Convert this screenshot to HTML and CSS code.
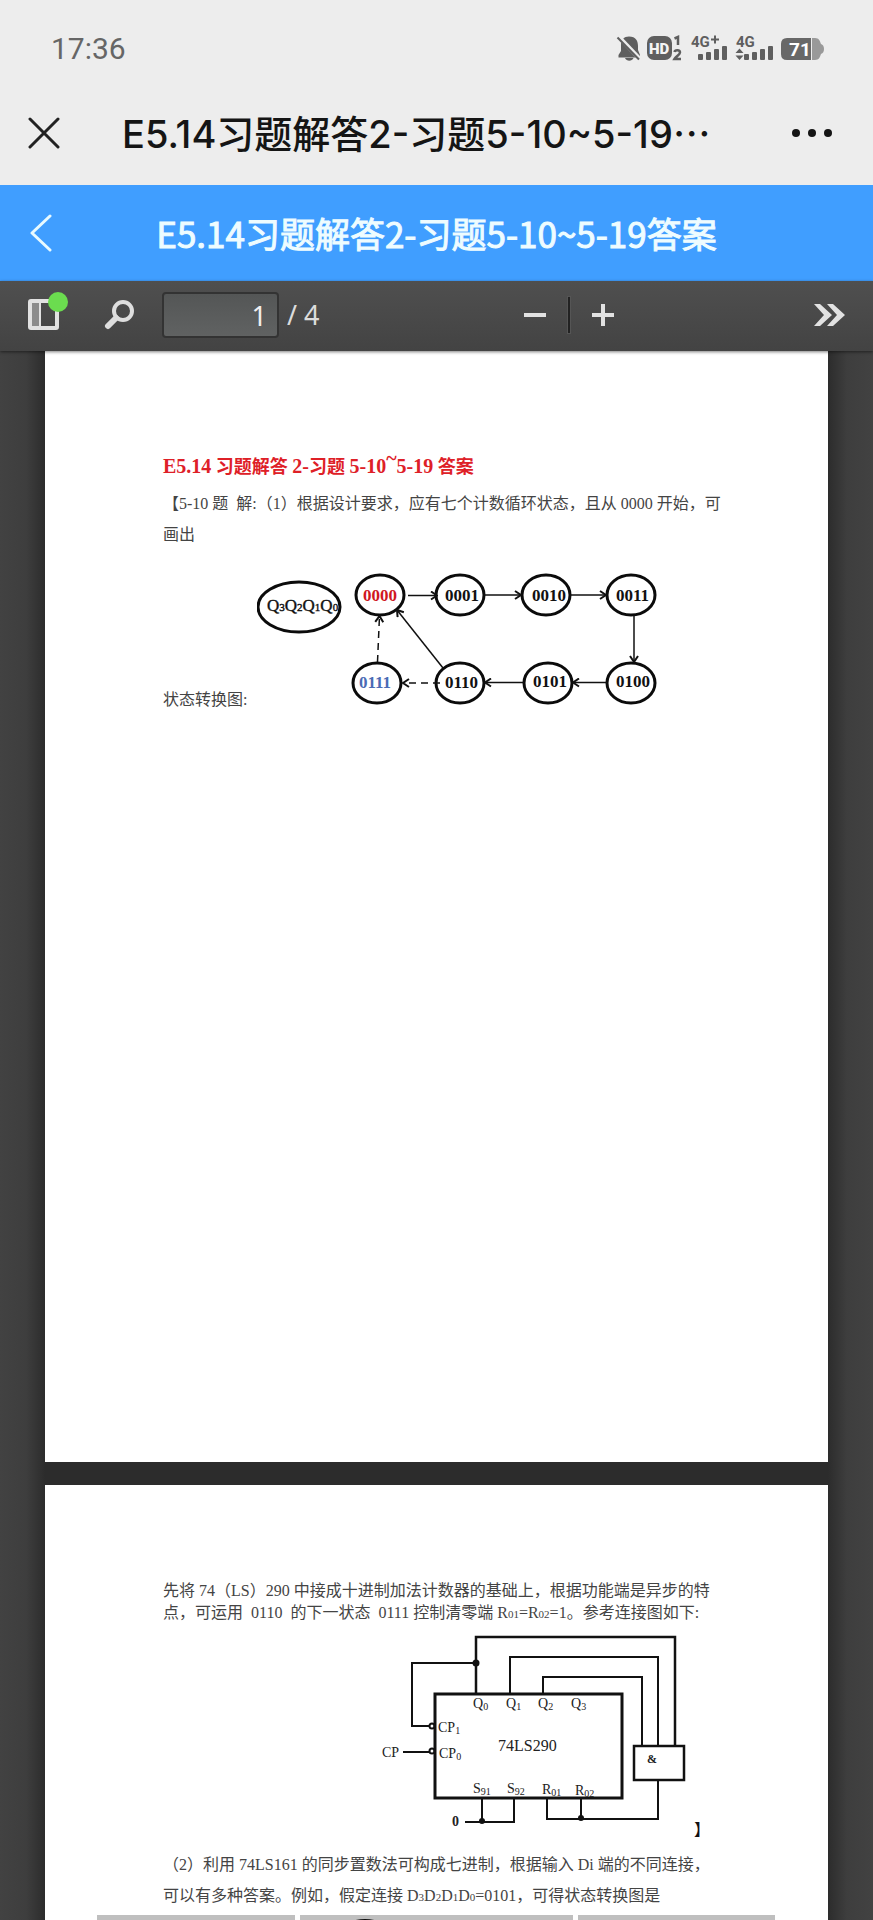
FILE: index.html
```html
<!DOCTYPE html>
<html lang="zh-CN">
<head>
<meta charset="utf-8">
<meta name="viewport" content="width=device-width, initial-scale=1">
<title>E5.14习题解答2-习题5-10~5-19答案</title>
<link rel="stylesheet" href="styles.css">
</head>
<body>
<div class="app">
  <div class="status">
    <span class="clock">17:36</span>
    <svg class="status-icons" width="208" height="28" viewBox="616 33 208 28" aria-hidden="true">
      <g fill="#5f5f5f">
        <path d="M629 35.500C636 35.500 638 40 638 45V49L640 54V56.500H618.500V54L621 50V44C621 38.500 624 35.500 629 35.500Z"/>
        <path d="M625 57H633.500C632 60.500 626.500 60.500 625 57Z"/>
        <path d="M618.500 35.500L639.500 57.500" stroke="#ededed" stroke-width="4"/>
        <path d="M617.500 36.500L639 58.500" stroke="#5f5f5f" stroke-width="2"/>
        <rect x="647" y="35" width="25" height="24" rx="7"/>
        <g stroke="#5f5f5f" stroke-width="2.500" fill="none">
          <path d="M674.500 37.500L678 36V44"/>
          <path d="M674.500 51C675 48.500 680 48.500 680 51.500C680 53.500 676 55.500 674.500 58H681"/>
        </g>
        <rect x="698" y="53" width="5" height="6" rx="1"/><rect x="706" y="51" width="5" height="8" rx="1"/><rect x="714" y="48" width="5" height="11" rx="1"/><rect x="722" y="45" width="5" height="14" rx="1"/>
        <rect x="744" y="53" width="5" height="6" rx="1"/><rect x="752" y="51" width="5" height="8" rx="1"/><rect x="760" y="48" width="5" height="11" rx="1"/><rect x="768" y="45" width="5" height="14" rx="1"/>
        <path d="M739.500 47.500L743.500 52H735.500ZM739.500 59L743.500 54.500H735.500Z"/>
        <path d="M711 38.500H719M715 34.500V42.500" stroke="#5f5f5f" stroke-width="2"/>
      </g>
      <path d="M812 37H815C819 37 820 40 821 43Q824 44 824 48Q824 52 821 53C820 56 819 59 815 59H812Z" fill="#999"/>
      <path d="M787 37H811V59H787Q781 59 781 53V43Q781 37 787 37Z" fill="#686868"/>
      <g font-family="Roboto, sans-serif" font-weight="900">
        <text x="649" y="53" font-size="15" fill="#f4f4f4">HD</text>
        <text x="691" y="46" font-size="15" font-weight="700" fill="#5f5f5f">4G</text>
        <text x="736" y="46" font-size="15" font-weight="700" fill="#5f5f5f">4G</text>
        <text x="789" y="55" font-size="19" font-weight="700" fill="#fff">71</text>
      </g>
    </svg>
  </div>

  <header class="titlebar">
    <button class="icon-btn" aria-label="关闭">
      <svg width="32" height="32" viewBox="0 0 32 32"><path d="M2 2L30 30M30 2L2 30" stroke="#222" stroke-width="3" stroke-linecap="round"/></svg>
    </button>
    <h1 class="webtitle">E5.14习题解答2-习题5-10~5-19<span class="dots">⋯</span></h1>
    <button class="icon-btn" aria-label="更多">
      <svg width="40" height="10" viewBox="0 0 40 10" fill="#151515"><circle cx="4" cy="5" r="4"/><circle cx="20" cy="5" r="4"/><circle cx="36" cy="5" r="4"/></svg>
    </button>
  </header>

  <header class="appbar">
    <button class="icon-btn" aria-label="返回">
      <svg width="22" height="38" viewBox="0 0 22 38"><path d="M20 2L2 19L20 36" fill="none" stroke="#e8faff" stroke-width="3" stroke-linecap="round" stroke-linejoin="round"/></svg>
    </button>
    <h2 class="apptitle">E5.14习题解答2-习题5-10~5-19答案</h2>
  </header>

  <div class="toolbar">
    <div class="tools">
      <button class="icon-btn" aria-label="切换侧栏">
        <svg class="spill" width="40" height="40" viewBox="0 0 40 40">
          <rect x="2" y="6" width="27" height="27" rx="1" fill="none" stroke="#e2e2e2" stroke-width="4"/>
          <rect x="4" y="8" width="7" height="23" fill="#8c8c8c"/>
          <path d="M12 7V32" stroke="#e2e2e2" stroke-width="2"/>
          <circle cx="30" cy="7" r="10" fill="#6bdc4f"/>
        </svg>
      </button>
      <button class="icon-btn find" aria-label="查找">
        <svg width="32" height="32" viewBox="0 0 32 32" fill="none" stroke="#dedede"><circle cx="19" cy="12" r="9" stroke-width="4"/><path d="M12 19L4 27" stroke-width="6" stroke-linecap="round"/></svg>
      </button>
      <input class="page-input" id="page" type="text" value="1" aria-label="页码">
      <label class="page-total" for="page">/ 4</label>
    </div>
    <div class="zoom">
      <button class="icon-btn" aria-label="缩小"><svg width="22" height="22" viewBox="0 0 22 22"><path d="M0 11H22" stroke="#e2e2e2" stroke-width="4"/></svg></button>
      <span class="divider"></span>
      <button class="icon-btn" aria-label="放大"><svg width="22" height="22" viewBox="0 0 22 22"><path d="M0 11H22M11 0V22" stroke="#e2e2e2" stroke-width="4"/></svg></button>
    </div>
    <button class="icon-btn" aria-label="工具">
      <svg width="31" height="22" viewBox="0 0 31 22" fill="#e2e2e2"><path d="M0 0H6L18 11L6 22H0L10 11Z"/><path d="M13 0H19L31 11L19 22H13L23 11Z"/></svg>
    </button>
  </div>

  <main class="viewer">
    <article class="page page-first">
      <h3 class="doc-title"><span class="latin">E5.14</span> 习题解答 <span class="latin">2-</span>习题 <span class="latin">5-10<sup>~</sup>5-19</span> 答案</h3>
      <p class="loose">【5-10 题&nbsp; 解:（1）根据设计要求，应有七个计数循环状态，且从 0000 开始，可</p>
      <p class="loose">画出</p>
      <div class="state-row">
        <span class="state-label">状态转换图:</span>
        <svg class="figure" width="400" height="145" viewBox="257 566 400 145" role="img" aria-label="状态转换图">
          <defs>
            <marker id="arrow" viewBox="0 0 8 10" refX="7" refY="5" markerWidth="8" markerHeight="10" markerUnits="userSpaceOnUse" orient="auto"><path d="M1 1L7 5L1 9" fill="none" stroke="#111" stroke-width="2"/></marker>
          </defs>
          <g fill="#fff" stroke="#0b0b0b" stroke-width="3">
            <ellipse cx="299" cy="607" rx="41" ry="25"/>
            <ellipse cx="380" cy="595" rx="24" ry="20"/>
            <ellipse cx="460" cy="595" rx="24" ry="20"/>
            <ellipse cx="546" cy="595" rx="24" ry="20"/>
            <ellipse cx="631" cy="595" rx="24" ry="20"/>
            <ellipse cx="377" cy="683" rx="24" ry="20"/>
            <ellipse cx="460" cy="683" rx="24" ry="20"/>
            <ellipse cx="548" cy="683" rx="24" ry="20"/>
            <ellipse cx="631" cy="683" rx="24" ry="20"/>
          </g>
          <g fill="none" stroke="#111" stroke-width="1.500">
            <path marker-end="url(#arrow)" d="M408 595.500H437"/>
            <path marker-end="url(#arrow)" d="M484 595H521"/>
            <path marker-end="url(#arrow)" d="M570 595H606"/>
            <path marker-end="url(#arrow)" d="M634 615V662"/>
            <path marker-end="url(#arrow)" d="M607 682.500H573"/>
            <path marker-end="url(#arrow)" d="M524 682.500H485"/>
            <path marker-end="url(#arrow)" d="M443 668L397 610"/>
            <path marker-end="url(#arrow)" stroke-dasharray="7 5" d="M440 683H403"/>
            <path marker-end="url(#arrow)" stroke-dasharray="7 5" d="M377.500 662L379.500 616"/>
          </g>
          <g class="serif bold" font-size="17" fill="#111">
            <text x="363" y="601" fill="#d0181f">0000</text>
            <text x="445" y="601">0001</text>
            <text x="532" y="601">0010</text>
            <text x="616" y="601">0011</text>
            <text x="359" y="688" fill="#4a6bb5">0111</text>
            <text x="445" y="688">0110</text>
            <text x="533" y="687">0101</text>
            <text x="616" y="687">0100</text>
          </g>
          <text class="serif" x="267" y="611" font-size="17" fill="#111" stroke="#111" stroke-width=".4">Q<tspan font-size="11">3</tspan>Q<tspan font-size="11">2</tspan>Q<tspan font-size="11">1</tspan>Q<tspan font-size="11">0</tspan></text>
        </svg>
      </div>
    </article>

    <article class="page page-second">
      <p>先将 74（LS）290 中接成十进制加法计数器的基础上，根据功能端是异步的特</p>
      <p>点，可运用&nbsp; 0110&nbsp; 的下一状态&nbsp; 0111 控制清零端 R<small>01</small>=R<small>02</small>=1。参考连接图如下:</p>
      <div class="circuit-row">
        <svg class="figure" width="314" height="216" viewBox="380 1625 314 216" role="img" aria-label="74LS290 连接图">
          <g fill="none" stroke="#111" stroke-width="2">
            <path d="M476 1693V1637H675V1746" stroke-width="2.500"/>
            <path d="M476 1663H412V1726H430"/>
            <path d="M510 1693V1657H658V1746"/>
            <path d="M543 1693V1677H642V1746"/>
            <path d="M403 1752H429"/>
            <path d="M658 1780V1819H547V1799"/>
            <path d="M581 1799V1819"/>
            <path d="M465 1822H514V1799M482 1822V1799"/>
            <rect x="435" y="1694" width="187" height="104" stroke-width="3"/>
            <rect x="634" y="1746" width="50" height="34" stroke-width="2.500"/>
            <circle cx="432" cy="1726" r="2.500"/>
            <circle cx="432" cy="1751" r="2.500"/>
          </g>
          <g fill="#111"><circle cx="476" cy="1663" r="3.500"/><circle cx="482" cy="1821" r="3"/><circle cx="581" cy="1818" r="3"/></g>
          <g class="serif" font-size="14" fill="#222">
            <text x="473" y="1708">Q<tspan font-size="10" dy="2">0</tspan></text>
            <text x="506" y="1708">Q<tspan font-size="10" dy="2">1</tspan></text>
            <text x="538" y="1708">Q<tspan font-size="10" dy="2">2</tspan></text>
            <text x="571" y="1708">Q<tspan font-size="10" dy="2">3</tspan></text>
            <text x="438" y="1732">CP<tspan font-size="10" dy="2">1</tspan></text>
            <text x="439" y="1758">CP<tspan font-size="10" dy="2">0</tspan></text>
            <text x="382" y="1757">CP</text>
            <text x="473" y="1793">S<tspan font-size="10" dy="2">91</tspan></text>
            <text x="507" y="1793">S<tspan font-size="10" dy="2">92</tspan></text>
            <text x="542" y="1794">R<tspan font-size="10" dy="2">01</tspan></text>
            <text x="575" y="1795">R<tspan font-size="10" dy="2">02</tspan></text>
            <text x="498" y="1751" font-size="16">74LS290</text>
            <text class="bold" x="452" y="1826">0</text>
            <text class="bold" x="647" y="1763" font-size="12">&amp;</text>
          </g>
        </svg>
        <span class="bracket">】</span>
      </div>
      <p class="loose">（2）利用 74LS161 的同步置数法可构成七进制，根据输入 Di 端的不同连接，</p>
      <p class="loose">可以有多种答案。例如，假定连接 D<small>3</small>D<small>2</small>D<small>1</small>D<small>0</small>=0101，可得状态转换图是</p>
      <div class="columns">
        <span></span>
        <span></span>
        <span></span>
        <svg class="arc" width="80" height="80" viewBox="0 0 80 80" aria-hidden="true"><circle cx="40" cy="40" r="37" fill="#fff" stroke="#111" stroke-width="6"/></svg>
      </div>
    </article>
  </main>
</div>
</body>
</html>
```
FILE: styles.css
```css
* { box-sizing: border-box; }

body {
  margin: 0;
  background: #404040;
  font-family: "Noto Sans CJK SC", sans-serif;
}

h1, h2, h3, p { margin: 0; font-weight: 400; white-space: nowrap; }

.app {
  display: flex;
  flex-direction: column;
  height: 100vh;
  overflow: hidden;
}

.icon-btn {
  display: flex;
  flex: none;
  padding: 0;
  border: 0;
  background: none;
}

.spill { overflow: visible; }

.status {
  display: flex;
  align-items: center;
  justify-content: space-between;
  height: 96px;
  padding: 0 49px 0 51px;
  background: #ededed;
}

.clock {
  padding-top: 2px;
  font: 30px/36px Roboto, sans-serif;
  color: #666;
}

.titlebar {
  display: flex;
  align-items: center;
  height: 89px;
  padding: 0 41px 15px 28px;
  background: #ededed;
}

.webtitle {
  flex: 1;
  padding-left: 62px;
  font: 500 38px/54px Inter, "Noto Sans CJK SC", sans-serif;
  color: #151515;
}

.dots { font-family: "Noto Sans CJK SC", sans-serif; }

.appbar {
  display: flex;
  align-items: center;
  height: 96px;
  padding: 0 30px;
  background: #409eff;
}

.apptitle {
  flex: 1;
  padding-right: 22px;
  text-align: center;
  font-size: 35px;
  font-weight: 400;
  line-height: 52px;
  color: #eefcff;
  -webkit-text-stroke: 1px #eefcff;
}

.toolbar {
  position: relative;
  z-index: 1;
  display: flex;
  align-items: center;
  justify-content: space-between;
  height: 70px;
  padding: 0 28px 2px;
  background: linear-gradient(#4f4f4f, #434343);
  box-shadow: 0 1px 3px rgba(0, 0, 0, .5);
}

.tools { display: flex; align-items: center; }

.find { margin: 0 26px 0 36px; }

.page-input {
  width: 117px;
  height: 46px;
  margin: 0 8px 0 0;
  padding: 0 10px;
  border: 2px solid #333;
  border-radius: 4px;
  background: linear-gradient(#545656, #606262);
  font: 27px/36px "Noto Sans", sans-serif;
  text-align: right;
  color: #f0f0f0;
}

.page-total {
  font: 27px/36px "Noto Sans", sans-serif;
  color: #dcdcdc;
}

.zoom { display: flex; align-items: center; gap: 22px; padding-left: 4px; }

.divider {
  width: 2px;
  height: 36px;
  background: #222;
  box-shadow: 0 0 0 1px #555;
}

.viewer {
  flex: 1;
  display: flex;
  flex-direction: column;
  gap: 23px;
  min-height: 0;
  padding: 0 45px;
  overflow: hidden;
  background: linear-gradient(90deg, #424242, #3e3e3e 26px, #2c2c2c 45px, #2c2c2c calc(100% - 45px), #3e3e3e calc(100% - 26px), #424242);
}

.page {
  flex: none;
  padding: 0 118px;
  background: #fff;
  font: 16px/22px "Liberation Serif", "Noto Sans CJK SC", serif;
  color: #444;
}

.page-first { padding-top: 101px; aspect-ratio: 783 / 1111; }
.page-second { padding-top: 95px; aspect-ratio: 783 / 1111; }

.page small { font-size: 11px; }

.doc-title {
  height: 31px;
  margin-bottom: 5px;
  font-size: 18px;
  font-weight: 700;
  line-height: 31px;
  color: #de2027;
}

.latin { font-size: 20px; line-height: 0; }

.doc-title sup { font-size: 20px; line-height: 0; }

.loose { line-height: 31px; }

.state-row { display: flex; align-items: flex-end; margin-top: 16px; }
.state-label { width: 94px; white-space: nowrap; }

.figure { display: block; flex: none; max-width: 100%; }

.circuit-row {
  display: flex;
  align-items: flex-end;
  justify-content: flex-end;
  margin: 0 0 8px;
}

.bracket { color: #111; }

.serif { font-family: "Liberation Serif", serif; }
.bold { font-weight: 700; }

.columns {
  position: relative;
  display: grid;
  grid-template-columns: 198fr 273fr 197fr;
  gap: 5px;
  margin: 2px -65px 0 -66px;
}

.columns span {
  height: 6px;
  background: #bfbfbf;
}

.arc {
  position: absolute;
  top: 4px;
  left: 228px;
}
```
